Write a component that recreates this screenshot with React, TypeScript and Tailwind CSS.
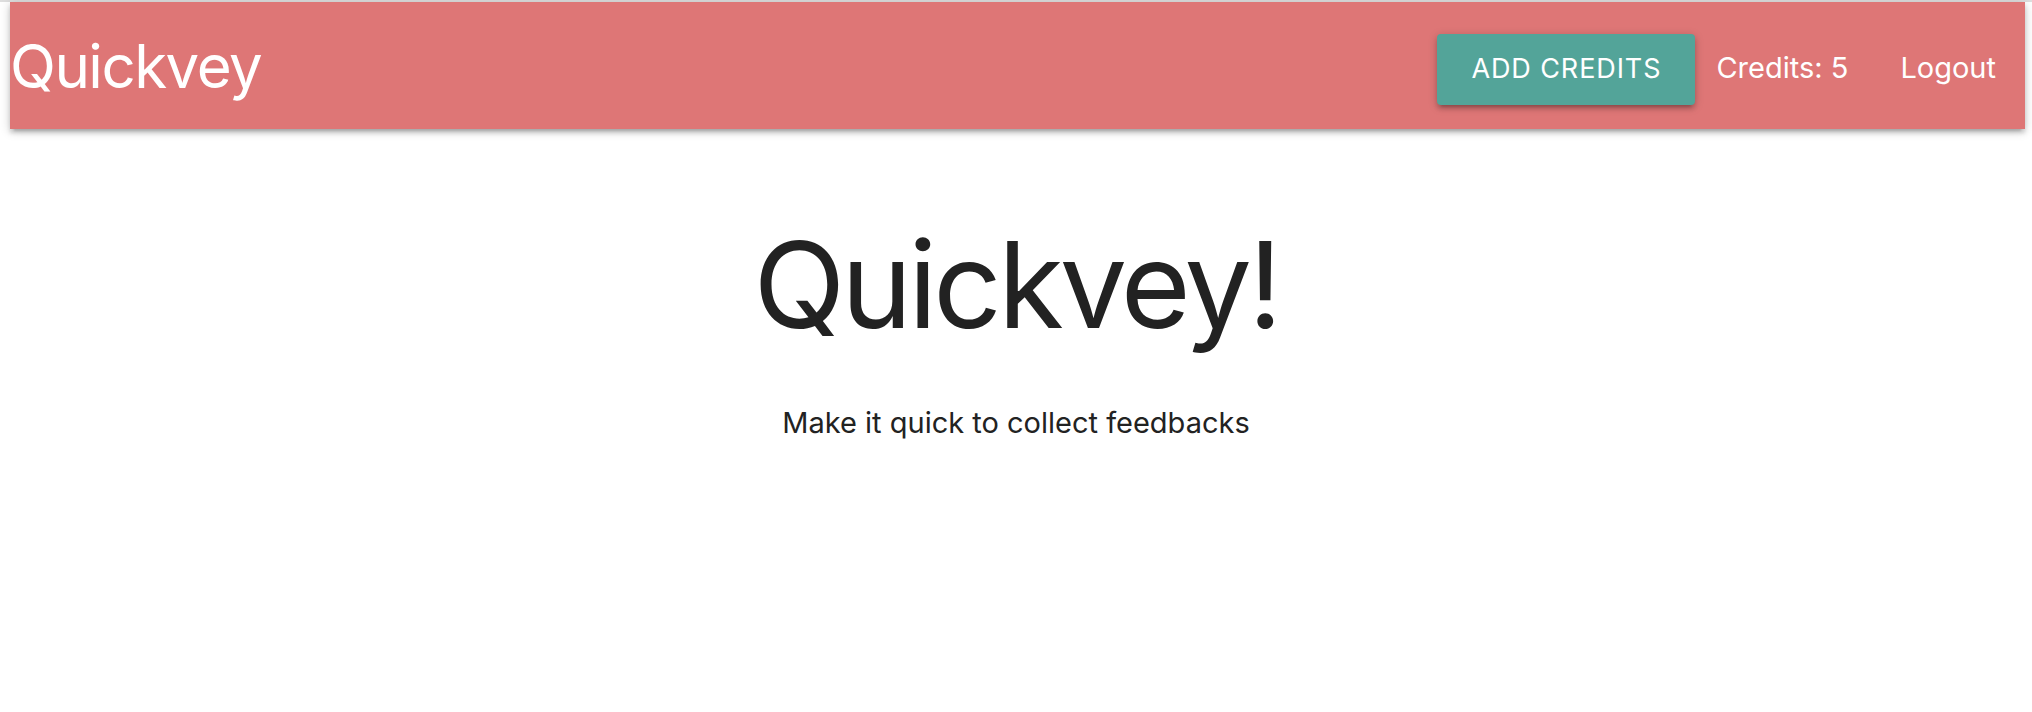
export default function App() {
  return (
    <div className="min-h-[712px] bg-white font-['Inter',sans-serif]">
      <div className="h-[2px] bg-[#dedede]" />
      <div className="pl-[10px] pr-[7px]">
        <nav className="flex h-[127px] items-center justify-between bg-[#de7676] text-white shadow-[0_4px_4px_0_rgba(0,0,0,0.14),0_6px_2px_-4px_rgba(0,0,0,0.12),0_2px_10px_0_rgba(0,0,0,0.2)]">
          <a className="pl-[0px] text-[60px] leading-none tracking-[-1.5px]">Quickvey</a>
          <ul className="flex h-full items-center">
            <li>
              <button className="mt-[8px] h-[71px] w-[258px] rounded-[4px] bg-[#53a499] text-[27px] tracking-[0.9px] text-white uppercase shadow-[0_4px_4px_0_rgba(0,0,0,0.14),0_6px_2px_-4px_rgba(0,0,0,0.12),0_2px_10px_0_rgba(0,0,0,0.2)]">
                Add credits
              </button>
            </li>
            <li className="mt-[4px] pl-[21px] pr-[26px] text-[29px]">Credits: 5</li>
            <li className="mt-[4px] pl-[26px] pr-[29px] text-[29px]">Logout</li>
          </ul>
        </nav>
      </div>
      <main className="flex flex-col items-center text-[#222]">
        <h1 className="mt-[90px] text-[120px] leading-[1.1] tracking-[-4px]">Quickvey!</h1>
        <p className="mt-[50px] text-[29px]">Make it quick to collect feedbacks</p>
      </main>
    </div>
  )
}
